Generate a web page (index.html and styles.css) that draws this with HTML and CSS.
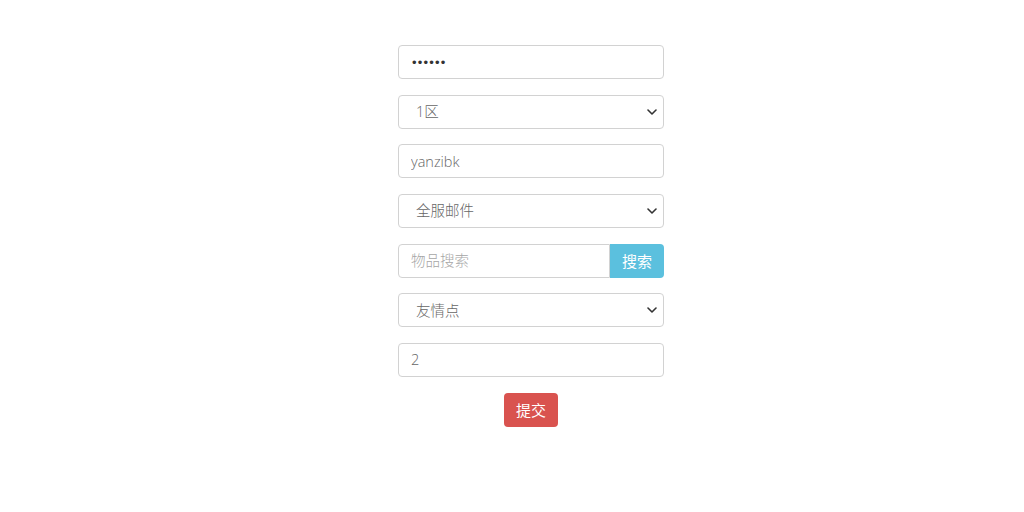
FILE: index.html
```html
<!DOCTYPE html>
<html lang="zh-CN">
<head>
<meta charset="utf-8">
<title>邮件</title>
<link rel="stylesheet" href="styles.css">
</head>
<body>
<form class="mail-form">
  <input class="field" type="password" value="123456">
  <div class="select-wrap">
    <select class="field select">
      <option>1区</option>
    </select>
  </div>
  <input class="field" type="text" value="yanzibk">
  <div class="select-wrap">
    <select class="field select">
      <option>全服邮件</option>
    </select>
  </div>
  <div class="input-group">
    <input class="field group-input" type="text" placeholder="物品搜索">
    <button type="button" class="btn btn-info">搜索</button>
  </div>
  <div class="select-wrap">
    <select class="field select">
      <option>友情点</option>
    </select>
  </div>
  <input class="field" type="text" value="2">
  <div class="actions">
    <button type="button" class="btn btn-danger">提交</button>
  </div>
</form>
</body>
</html>
```
FILE: styles.css
```css
html, body {
  margin: 0;
  padding: 0;
  background: #fff;
}

body {
  font-family: "Open Sans", "Noto Sans CJK SC", sans-serif;
  font-size: 14px;
  color: #555;
}

.mail-form {
  width: 266px;
  margin: 45px 0 0 398px;
  display: flex;
  flex-direction: column;
  gap: 15.67px;
}

.field {
  box-sizing: border-box;
  display: block;
  width: 100%;
  height: 34px;
  margin: 0;
  padding: 0 12px;
  border: 1px solid #d2d2d2;
  border-radius: 4px;
  background: #fff;
  font-family: "Open Sans", "Noto Sans CJK SC", sans-serif;
  font-size: 14.5px;
  font-weight: 300;
  color: #666;
  outline: none;
}

.field[type="password"] {
  font-family: "DejaVu Sans", sans-serif;
  font-size: 13px;
  letter-spacing: 1.2px;
  color: #333;
  padding-left: 13px;
}

.field::placeholder {
  color: #a6a6a6;
}

.select-wrap {
  position: relative;
}

.select {
  -webkit-appearance: none;
  appearance: none;
  padding-left: 17px;
  color: #666;
  background-image: url("data:image/svg+xml;utf8,<svg xmlns='http://www.w3.org/2000/svg' width='10' height='6' viewBox='0 0 10 6'><path d='M1 1l4 4 4-4' fill='none' stroke='%23333' stroke-width='1.6' stroke-linecap='round' stroke-linejoin='round'/></svg>");
  background-repeat: no-repeat;
  background-position: right 6px center;
  background-size: 10px 6px;
}

.input-group {
  display: flex;
}

.group-input {
  flex: 1;
  min-width: 0;
  border-top-right-radius: 0;
  border-bottom-right-radius: 0;
}

.btn {
  box-sizing: border-box;
  height: 34px;
  width: 54px;
  padding: 0;
  border: none;
  border-radius: 4px;
  color: #fff;
  font-family: "Noto Sans CJK SC", sans-serif;
  font-size: 15px;
  font-weight: 400;
  cursor: pointer;
}

.btn-info {
  background: #5bc0de;
  border-top-left-radius: 0;
  border-bottom-left-radius: 0;
}

.btn-danger {
  background: #d9534f;
}

.actions {
  display: flex;
  justify-content: center;
}
```
